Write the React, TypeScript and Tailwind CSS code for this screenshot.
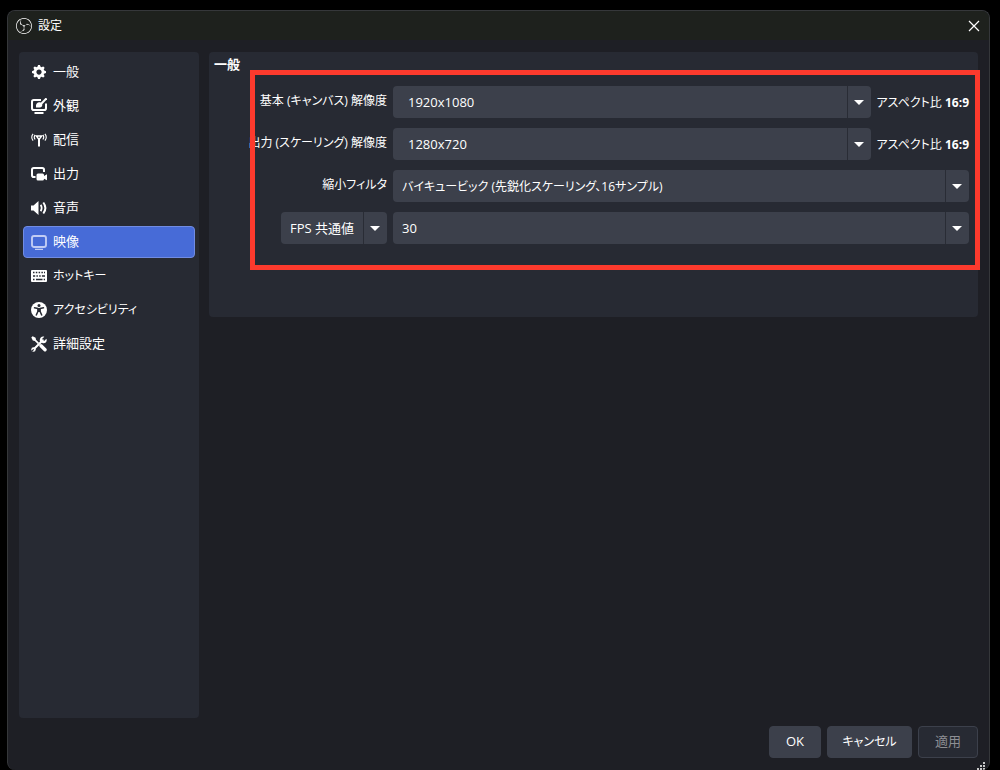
import { useState } from "react";
import type { ReactNode } from "react";
import { SiObsstudio } from "react-icons/si";
import clsx from "clsx";

type NavItem = { id: string; label: string; icon: ReactNode; small?: boolean };

function GearIcon() {
  return (
    <svg viewBox="0 0 8 8" className="size-3.5" fill="currentColor" aria-hidden="true">
      <path d="M3.5 0l-.5 1.19c-.1.03-.19.08-.28.13l-1.19-.5-.72.72.5 1.19c-.05.1-.09.18-.13.28l-1.19.5v1l1.19.5c.04.1.08.18.13.28l-.5 1.19.72.72 1.19-.5c.09.04.18.09.28.13l.5 1.19h1l.5-1.19c.09-.04.19-.08.28-.13l1.19.5.72-.72-.5-1.19c.04-.09.09-.19.13-.28l1.19-.5v-1l-1.19-.5c-.03-.09-.08-.19-.13-.28l.5-1.19-.72-.72-1.19.5c-.09-.04-.19-.09-.28-.13l-.5-1.19h-1zm.5 2.5c.83 0 1.5.67 1.5 1.5s-.67 1.5-1.5 1.5-1.5-.67-1.5-1.5.67-1.5 1.5-1.5z" />
    </svg>
  );
}

function AppearanceIcon() {
  return (
    <svg viewBox="0 0 16 16" className="size-4" fill="none" stroke="currentColor" aria-hidden="true">
      <path d="M10 1.900H2.800Q1 1.900 1 3.700v6.600q0 1.800 1.800 1.800h10.400q1.800 0 1.800-1.800V5.500" strokeWidth="2" />
      <path d="M3.500 15h9" strokeWidth="1.800" />
      <path d="M15.500.3 9.800 6.200" strokeWidth="2" />
      <path d="M9.600 4.400C7.300 3.600 5 5 5 7.400V9.600h3.400c2.200 0 3.400-1.800 2.700-3.600z" fill="currentColor" stroke="none" />
    </svg>
  );
}

function AntennaIcon() {
  return (
    <svg viewBox="0 0 16 16" className="size-4" fill="none" stroke="currentColor" aria-hidden="true">
      <path d="M2.100 1.800Q-.6 5.200 2.100 8.600M13.900 1.800q2.700 3.400 0 6.800" strokeWidth="1.100" />
      <path d="M4.100 2.900q-1.700 2.300 0 4.600M11.900 2.900q1.700 2.300 0 4.600" strokeWidth="1.100" />
      <path d="M5.300 4h5.400L8 7.500z" strokeWidth="1.400" />
      <path d="M8 7v7.500" strokeWidth="2" />
    </svg>
  );
}

function OutputIcon() {
  return (
    <svg viewBox="0 0 16 16" className="size-4" fill="none" stroke="currentColor" aria-hidden="true">
      <path d="M4.500 11H2.800Q1 11 1 9.200V3.800Q1 2 2.800 2h8.400Q13 2 13 3.800V6" strokeWidth="2" />
      <path d="M7 7.500h4.500q1.500 0 1.500 1.500v1l3-1.700v6L13 12.700v.3q0 1.500-1.500 1.500H7Q5.500 14.500 5.500 13V9Q5.500 7.500 7 7.500z" fill="currentColor" stroke="none" />
    </svg>
  );
}

function SpeakerIcon() {
  return (
    <svg viewBox="0 0 16 16" className="size-4" fill="none" stroke="currentColor" aria-hidden="true">
      <path d="M0 5.500h2.500L7.500 1v14l-5-4.500H0z" fill="currentColor" stroke="none" />
      <path d="M9.700 4.800q2 3.200 0 6.400" strokeWidth="1.700" />
      <path d="M12.300 2.500q4.200 5.500 0 11" strokeWidth="2" />
    </svg>
  );
}

function MonitorIcon() {
  return (
    <svg viewBox="0 0 16 16" className="size-4 text-[#c1ccf4]" fill="none" stroke="currentColor" aria-hidden="true">
      <rect x="1" y="2" width="14" height="11" rx="2" strokeWidth="1.900" />
      <path d="M4 15.300h8" strokeWidth="1.200" />
    </svg>
  );
}

function KeyboardIcon() {
  return (
    <svg viewBox="0 0 16 16" className="size-4" aria-hidden="true">
      <rect y="2" width="16" height="12" rx="1" fill="currentColor" />
      <path
        d="M2 4.500h1.500m1.300 0h1.500m1.300 0h1.500m1.300 0h1.500m1.100 0H14M2 8h2.200m1.200 0h1.500m1.300 0h1.500m1.200 0H14M2 11.500h1.500m1.500 0h6.500m1.200 0H14"
        stroke="#272a33"
        strokeWidth="1.400"
      />
    </svg>
  );
}

function AccessibilityIcon() {
  return (
    <svg viewBox="0 0 16 16" className="size-4" aria-hidden="true">
      <circle cx="8" cy="8" r="8" fill="currentColor" />
      <circle cx="8" cy="3.500" r="1.500" fill="#272a33" />
      <path
        d="M3.500 5.800 7 6.600v2.600L5.300 13M12.500 5.800 9 6.600v2.600l1.700 3.800"
        fill="none"
        stroke="#272a33"
        strokeWidth="1.500"
        strokeLinecap="round"
        strokeLinejoin="round"
      />
      <path d="M6.500 6h3v4h-3z" fill="#272a33" />
    </svg>
  );
}

function ToolsIcon() {
  return (
    <svg viewBox="0 0 16 16" className="size-4" fill="none" stroke="currentColor" aria-hidden="true">
      <path d="M.3 1.600 1.600.3l3 1.500.4 2L8 6.800 6.800 8l-3-3-2-.4z" fill="currentColor" stroke="none" />
      <path d="m10 9.800 4 4" strokeWidth="3.400" strokeLinecap="round" />
      <path d="M2 14 11.800 4.300" strokeWidth="2" strokeLinecap="round" />
      <path d="M13.300.7 11 3l.3 1.800 1.800.3 2.300-2.300c1.100 2.700-1 5-3.500 4.500L9 5.500C8 2.700 10.500-.3 13.300.7z" fill="currentColor" stroke="none" />
      <circle cx="2.500" cy="13.500" r="2.200" fill="currentColor" stroke="none" />
      <path d="m.8 15.200 1.900-1.900" stroke="#272a33" strokeWidth="1.200" />
    </svg>
  );
}

const navItems: NavItem[] = [
  { id: "general", label: "一般", icon: <GearIcon /> },
  { id: "appearance", label: "外観", icon: <AppearanceIcon /> },
  { id: "stream", label: "配信", icon: <AntennaIcon /> },
  { id: "output", label: "出力", icon: <OutputIcon /> },
  { id: "audio", label: "音声", icon: <SpeakerIcon /> },
  { id: "video", label: "映像", icon: <MonitorIcon /> },
  { id: "hotkeys", label: "ホットキー", icon: <KeyboardIcon />, small: true },
  { id: "accessibility", label: "アクセシビリティ", icon: <AccessibilityIcon />, small: true },
  { id: "advanced", label: "詳細設定", icon: <ToolsIcon /> },
];

function Select({
  id,
  label,
  options,
  wide = false,
  className,
}: {
  id: string;
  label?: string;
  options: string[];
  wide?: boolean;
  className?: string;
}) {
  return (
    <div className={clsx("relative h-8 rounded bg-[#3c404b]", className)}>
      <select
        id={id}
        aria-label={label}
        className={clsx(
          "h-8 w-full appearance-none rounded bg-transparent pt-0.5 pr-8 outline-none",
          wide ? "pl-[15px]" : "pl-[9px]",
        )}
      >
        {options.map((option) => (
          <option key={option} className="bg-[#3c404b]">
            {option}
          </option>
        ))}
      </select>
      <span className="pointer-events-none absolute inset-y-0 right-0 flex w-6 items-center justify-center border-l border-[#292c35] pr-px">
        <svg viewBox="0 0 10 5" className="h-[5px] w-2.5" fill="currentColor" aria-hidden="true">
          <path d="M0 0h10L5 5z" />
        </svg>
      </span>
    </div>
  );
}

function Row({ label, children }: { label: ReactNode; children: ReactNode }) {
  return (
    <div className="flex items-center gap-1.5">
      <div className="flex w-[172px] shrink-0 justify-end whitespace-nowrap">{label}</div>
      {children}
    </div>
  );
}

function RowLabel({ htmlFor, children }: { htmlFor: string; children: ReactNode }) {
  return (
    <label htmlFor={htmlFor} className="pb-0.5 text-xs">
      {children}
    </label>
  );
}

function AspectRatio({ value }: { value: string }) {
  return (
    <span className="shrink-0 pt-0.5 text-xs whitespace-nowrap">
      アスペクト比 <b>{value}</b>
    </span>
  );
}

function VideoSettings() {
  return (
    <section className="relative rounded bg-[#272a33] pr-[9px] pb-[73px] pl-1.5">
      <h2 className="-ml-px pt-0.5 pb-3 leading-5 font-bold">一般</h2>
      <div className="flex flex-col gap-2.5">
        <Row label={<RowLabel htmlFor="base">基本 (キャンバス) 解像度</RowLabel>}>
          <Select id="base" wide className="min-w-0 flex-1" options={["1920x1080", "1280x720"]} />
          <AspectRatio value="16:9" />
        </Row>
        <Row label={<RowLabel htmlFor="scaled">出力 (スケーリング) 解像度</RowLabel>}>
          <Select id="scaled" wide className="min-w-0 flex-1" options={["1280x720", "1920x1080"]} />
          <AspectRatio value="16:9" />
        </Row>
        <Row label={<RowLabel htmlFor="filter">縮小フィルタ</RowLabel>}>
          <Select
            id="filter"
            className="min-w-0 flex-1 text-xs"
            options={["バイキュービック (先鋭化スケーリング、16サンプル)"]}
          />
        </Row>
        <Row
          label={
            <Select id="fps-type" label="FPS の種類" className="w-[106px]" options={["FPS 共通値"]} />
          }
        >
          <Select id="fps" label="FPS" className="min-w-0 flex-1" options={["30", "60"]} />
        </Row>
      </div>
      {/* highlight frame around the video options */}
      <div className="pointer-events-none absolute top-[18px] -right-0.5 left-[41px] h-[200px] border-5 border-[#fd3a2d]" />
    </section>
  );
}

export default function App() {
  const [active, setActive] = useState("video");

  return (
    <div className="h-screen bg-black pt-2.5 pr-2.5 pl-[7px] font-['Open_Sans','Noto_Sans_CJK_JP',sans-serif] text-[13px] text-white [font-feature-settings:'palt']">
      <div className="relative flex h-full flex-col overflow-hidden rounded-lg border-x border-t border-[#35373a] bg-[#1e1f25]">
        <header className="flex h-[29px] shrink-0 items-center bg-[#1e211d] pr-[7px] pl-2">
          <SiObsstudio className="size-4" aria-hidden="true" />
          <h1 className="ml-1.5 flex-1 text-xs">設定</h1>
          <button type="button" aria-label="閉じる" className="p-0.5">
            <svg viewBox="0 0 12 12" className="size-3" stroke="currentColor" aria-hidden="true">
              <path d="M1 1l10 10M11 1L1 11" strokeWidth="1.200" />
            </svg>
          </button>
        </header>

        <div className="flex min-h-0 flex-1 gap-2.5 px-[11px] pt-3">
          <nav className="flex w-[180px] shrink-0 flex-col gap-0.5 rounded bg-[#272a33] p-1">
            {navItems.map((item) => (
              <button
                key={item.id}
                type="button"
                onClick={() => setActive(item.id)}
                className={clsx(
                  "flex h-8 items-center gap-1.5 rounded border px-[7px] text-left",
                  item.small && "text-xs",
                  active === item.id ? "border-[#718ce2] bg-[#476bd7]" : "border-transparent",
                )}
              >
                <span className="flex size-4 shrink-0 items-center justify-center">{item.icon}</span>
                {item.label}
              </button>
            ))}
          </nav>
          <main className="min-w-0 flex-1">
            <VideoSettings />
          </main>
        </div>

        <footer className="flex shrink-0 justify-end gap-1.5 px-[11px] pt-2 pb-3">
          <button type="button" className="h-8 rounded border border-[#3c404b] bg-[#3c404b] px-4">
            OK
          </button>
          <button type="button" className="h-8 w-[85px] rounded border border-[#3c404b] bg-[#3c404b] text-xs">
            キャンセル
          </button>
          <button type="button" disabled className="h-8 rounded border border-[#3c404b] bg-[#272a33] px-4 text-[#8d8e93]">
            適用
          </button>
        </footer>

        {/* resize grip */}
        <svg viewBox="0 0 8 8" className="absolute right-1 bottom-0 size-2" fill="#c8c8c8" aria-hidden="true">
          <path d="M6 0h2v2H6zM3 3h2v2H3zM6 3h2v2H6zM0 6h2v2H0zM3 6h2v2H3zM6 6h2v2H6z" />
        </svg>
      </div>
    </div>
  );
}
